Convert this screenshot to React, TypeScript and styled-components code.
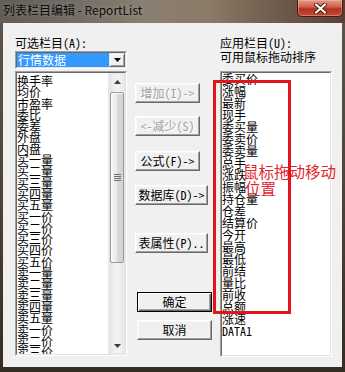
import React from "react";
import styled, { createGlobalStyle } from "styled-components";

const GlobalStyle = createGlobalStyle`
  html, body { margin: 0; padding: 0; background: #3f3630; }
  body { width: 345px; height: 372px; overflow: hidden; }
  * { box-sizing: border-box; }
`;

const ctrlFont = `"Noto Sans Mono CJK SC", "Noto Sans CJK SC", sans-serif`;

const Window = styled.div`
  width: 345px;
  height: 372px;
  display: flex;
  flex-direction: column;
  overflow: hidden;
  background: linear-gradient(180deg, #5e564e 0%, #4c4239 55%, #352c24 100%);
`;

const TitleBar = styled.div`
  height: 23px;
  flex: none;
  display: flex;
  align-items: flex-start;
  justify-content: space-between;
  background: linear-gradient(
    90deg,
    #625c55 0%,
    #6f6962 18%,
    #8a7f71 42%,
    #8b7b68 60%,
    #6f5c4c 80%,
    #5a3f35 100%
  );
`;

const Title = styled.div`
  font-family: "Noto Sans CJK SC", sans-serif;
  font-size: 12px;
  line-height: 14px;
  padding: 3px 0 0 3px;
  color: #0c0c0c;
  white-space: nowrap;
  text-shadow: 0 0 5px rgba(255, 255, 255, 0.3);
`;

const CloseBtn = styled.div`
  width: 46px;
  height: 17px;
  margin-right: 2px;
  border: 1px solid #4a1a12;
  border-top: none;
  border-radius: 0 0 5px 5px;
  background: linear-gradient(180deg, #e39a88 0%, #d2624c 42%, #b5321e 55%, #c24a34 100%);
  box-shadow: inset 0 0 0 1px rgba(255, 220, 210, 0.35);
  display: flex;
  align-items: center;
  justify-content: center;
`;

const Body = styled.div`
  flex: 1;
  margin: 0 3px 5px 3px;
  background: #f0f0f0;
  display: grid;
  grid-template-columns: 112px 77px 112px;
  column-gap: 8px;
  padding: 13px 10px 0 12px;
`;

const Column = styled.div`
  display: flex;
  flex-direction: column;
  position: relative;
`;

const MidColumn = styled.div`
  display: flex;
  flex-direction: column;
  align-items: flex-start;
  padding-top: 47px;
`;

const Label = styled.div`
  font-family: ${ctrlFont};
  font-size: 12px;
  line-height: 14px;
  height: 14px;
  color: #000;
  white-space: nowrap;
`;

const Combo = styled.div`
  margin-top: 1px;
  height: 18px;
  border: 1px solid;
  border-color: #a0a0a0 #ffffff #ffffff #a0a0a0;
  display: flex;
`;

const ComboInner = styled.div`
  flex: 1;
  display: flex;
  background: #fff;
  border: 1px solid;
  border-color: #696969 #e3e3e3 #e3e3e3 #696969;
`;

const ComboValue = styled.div`
  flex: 1;
  background: #3399ff;
  color: #fff;
  font-family: ${ctrlFont};
  font-size: 12px;
  line-height: 14px;
  padding-left: 1px;
  white-space: nowrap;
`;

const DropBtn = styled.div`
  width: 16px;
  flex: none;
  background: #f0f0f0;
  border: 1px solid;
  border-color: #e3e3e3 #696969 #696969 #e3e3e3;
  box-shadow: inset 1px 1px 0 #fff, inset -1px -1px 0 #a0a0a0;
  display: flex;
  align-items: center;
  justify-content: center;
`;

const ListBox = styled.div<{ $mt: number; $h: number }>`
  margin-top: ${(p) => p.$mt}px;
  height: ${(p) => p.$h}px;
  border: 1px solid;
  border-color: #a0a0a0 #ffffff #ffffff #a0a0a0;
  display: flex;
`;

const ListInner = styled.div`
  flex: 1;
  display: flex;
  overflow: hidden;
  background: #fff;
  border: 1px solid;
  border-color: #696969 #e3e3e3 #e3e3e3 #696969;
`;

const Items = styled.div<{ $lh: number; $pt: number }>`
  flex: 1;
  overflow: hidden;
  padding-top: ${(p) => p.$pt}px;
  font-family: ${ctrlFont};
  font-size: 12px;
  line-height: ${(p) => p.$lh}px;
  color: #000;
  white-space: nowrap;
`;

const Item = styled.div``;

const ScrollBar = styled.div`
  width: 17px;
  flex: none;
  display: flex;
  flex-direction: column;
  background: linear-gradient(90deg, #e3e3e3 0%, #eeeeee 30%, #f2f2f2 60%, #e6e6e6 100%);
  border-left: 1px solid #e9e9e9;
`;

const ArrowBtn = styled.div`
  height: 17px;
  flex: none;
  display: flex;
  align-items: center;
  justify-content: center;
`;

const Track = styled.div`
  flex: 1;
  display: flex;
  flex-direction: column;
`;

const Thumb = styled.div<{ $top: number; $h: number }>`
  margin: ${(p) => p.$top}px 1px 0 1px;
  height: ${(p) => p.$h}px;
  border: 1px solid #9a9a9a;
  border-radius: 2px;
  background: linear-gradient(90deg, #f5f5f5 0%, #ebebeb 45%, #dadada 52%, #d2d2d2 100%);
  box-shadow: inset 1px 1px 0 #fcfcfc;
  display: flex;
  align-items: center;
  justify-content: center;
`;

const Button = styled.div<{ $w: number; $mt: number; $ml?: number; $disabled?: boolean; $default?: boolean }>`
  width: ${(p) => p.$w}px;
  height: 20px;
  margin-top: ${(p) => p.$mt}px;
  margin-left: ${(p) => p.$ml ?? 0}px;
  background: #f0f0f0;
  border: 1px solid;
  border-color: ${(p) => (p.$default ? "#000 #000 #000 #000" : "#ffffff #696969 #696969 #ffffff")};
  box-shadow: ${(p) =>
    p.$default
      ? "inset 1px 1px 0 #fff, inset -1px -1px 0 #696969, inset -2px -2px 0 #a0a0a0"
      : "inset -1px -1px 0 #a0a0a0, inset 1px 1px 0 #f8f8f8"};
  display: flex;
  align-items: center;
  justify-content: center;
  font-family: ${ctrlFont};
  font-size: 12px;
  line-height: 14px;
  white-space: nowrap;
  color: ${(p) => (p.$disabled ? "#a0a0a0" : "#000")};
  text-shadow: ${(p) => (p.$disabled ? "1px 1px 0 #ffffff" : "none")};
`;

const RedFrame = styled.div`
  position: absolute;
  left: -7px;
  top: 44px;
  width: 78px;
  height: 234px;
  border: 3px solid #e2141c;
  pointer-events: none;
`;

const RedNote = styled.div`
  position: absolute;
  left: 23px;
  top: 127px;
  font-family: "Noto Sans CJK SC", sans-serif;
  font-size: 15.5px;
  line-height: 17px;
  color: #e2262c;
  white-space: nowrap;
  pointer-events: none;
`;

const NoteLine = styled.div<{ $indent?: number }>`
  padding-left: ${(p) => p.$indent ?? 0}px;
`;

const leftItems = [
  "换手率", "均价", "市盈率", "委比", "委差", "外盘", "内盘",
  "买一量", "买二量", "买三量", "买四量", "买五量",
  "买一价", "买二价", "买三价", "买四价", "买五价",
  "卖一量", "卖二量", "卖三量", "卖四量", "卖五量",
  "卖一价", "卖二价", "卖三价", "卖四价", "卖五价",
];

const rightItems = [
  "委买价", "涨幅", "最新", "现手", "委买量", "委卖价", "委卖量", "总手",
  "涨跌", "振幅", "持仓量", "仓差", "结算价", "今开", "最高", "最低",
  "前结", "量比", "前收", "总额", "涨速", "DATA1",
];

const Tri = ({ up }: { up?: boolean }) => (
  <svg width="7" height="4" viewBox="0 0 7 4">
    <path d={up ? "M0 4 L3.5 0 L7 4 Z" : "M0 0 L7 0 L3.5 4 Z"} fill="#3c3c3c" />
  </svg>
);

const Grip = () => (
  <svg width="7" height="8" viewBox="0 0 7 8">
    {[0, 2, 4, 6].map((y) => (
      <rect key={y} x="0" y={y} width="7" height="1" fill="#6e6e6e" />
    ))}
  </svg>
);

export default function App() {
  return (
    <>
      <GlobalStyle />
      <Window>
        <TitleBar>
          <Title>列表栏目编辑 - ReportList</Title>
          <CloseBtn>
            <svg width="13" height="11" viewBox="0 0 13 11">
              <path d="M2 1.5 L11 9.5 M11 1.5 L2 9.5" stroke="#4a1810" strokeWidth="4" strokeLinecap="round" />
              <path d="M2 1.5 L11 9.5 M11 1.5 L2 9.5" stroke="#ffffff" strokeWidth="2.2" strokeLinecap="round" />
            </svg>
          </CloseBtn>
        </TitleBar>
        <Body>
          <Column>
            <Label>可选栏目(A):</Label>
            <Combo>
              <ComboInner>
                <ComboValue>行情数据</ComboValue>
                <DropBtn>
                  <svg width="7" height="4" viewBox="0 0 7 4">
                    <path d="M0 0 L7 0 L3.5 4 Z" fill="#000" />
                  </svg>
                </DropBtn>
              </ComboInner>
            </Combo>
            <ListBox $mt={2} $h={285}>
              <ListInner>
                <Items $lh={11.3} $pt={2}>
                  {leftItems.map((t) => (
                    <Item key={t}>{t}</Item>
                  ))}
                </Items>
                <ScrollBar>
                  <ArrowBtn>
                    <Tri up />
                  </ArrowBtn>
                  <Track>
                    <Thumb $top={2} $h={171}>
                      <Grip />
                    </Thumb>
                  </Track>
                  <ArrowBtn>
                    <Tri />
                  </ArrowBtn>
                </ScrollBar>
              </ListInner>
            </ListBox>
          </Column>

          <MidColumn>
            <Button $w={65} $mt={0} $disabled>增加(I)-&gt;</Button>
            <Button $w={65} $mt={13} $disabled>&lt;-减少(S)</Button>
            <Button $w={65} $mt={15}>公式(F)-&gt;</Button>
            <Button $w={73} $mt={14}>数据库(D)-&gt;</Button>
            <Button $w={73} $mt={28}>表属性(P)..</Button>
            <Button $w={75} $mt={39} $ml={2} $default>确定</Button>
            <Button $w={75} $mt={8} $ml={2}>取消</Button>
          </MidColumn>

          <Column>
            <Label>应用栏目(U):</Label>
            <Label>可用鼠标拖动排序</Label>
            <ListBox $mt={7} $h={286}>
              <ListInner>
                <Items $lh={12} $pt={0}>
                  {rightItems.map((t) => (
                    <Item key={t}>{t}</Item>
                  ))}
                </Items>
              </ListInner>
            </ListBox>
            <RedFrame />
            <RedNote>
              <NoteLine>鼠标拖动移动</NoteLine>
              <NoteLine $indent={2}>位置</NoteLine>
            </RedNote>
          </Column>
        </Body>
      </Window>
    </>
  );
}
